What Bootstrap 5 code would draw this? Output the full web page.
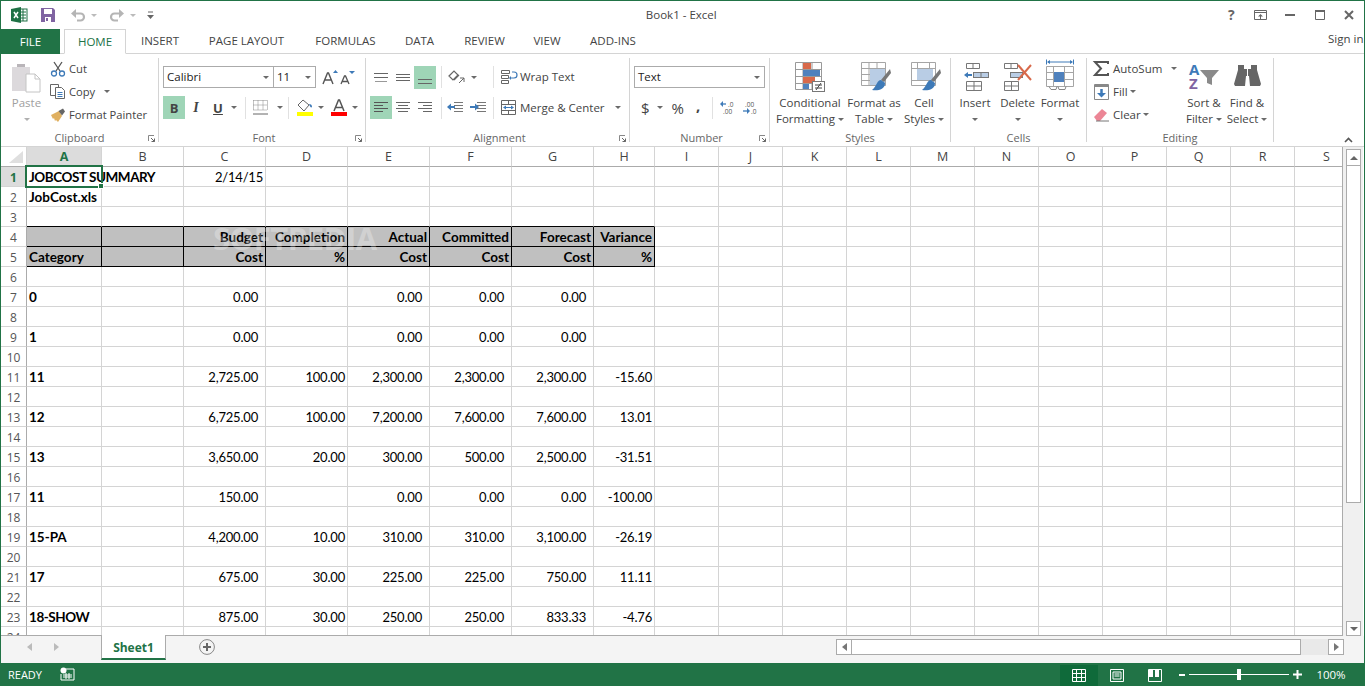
<!DOCTYPE html>
<html lang="en"><head><meta charset="utf-8"><title>Book1 - Excel</title>
<link href="https://cdn.jsdelivr.net/npm/bootstrap@5.3.0/dist/css/bootstrap.min.css" rel="stylesheet">
<style>
html,body{height:100%;overflow:hidden;background:#fff}
body{font:12px/16px "Open Sans",sans-serif;color:#444}
svg{display:block;flex:none;overflow:visible}
.xw{width:1365px;height:686px;border:1px solid #217346;border-bottom:0}
.ttl{height:28px;flex:none;position:relative}
.ttl-name{flex:1;text-align:center;padding-right:8px;font-size:11.5px;color:#444}
.qa{padding-left:10px;gap:0}
.wc{gap:0;padding-right:0}
.wcb{width:29.5px;display:flex;justify-content:center}
.tabs{height:25px;flex:none;border-bottom:1px solid #d4d4d4;font-size:11.5px}
.tb-file{width:59px;height:25px;background:#217346;color:#fff;text-align:center;line-height:25px;margin-right:4px}
.tb{height:25px;line-height:24px;text-align:center;color:#444}
.tb-on{width:62px;border:1px solid #d4d4d4;border-bottom:1px solid #fff;color:#217346;background:#fff}
.signin{margin-left:auto;font-size:11.5px;padding-right:0;width:36px;white-space:nowrap;overflow:hidden;margin-top:2px}
.rbn{height:93px;flex:none;border-bottom:1px solid #d4d4d4;padding-top:4px}
.grp{height:84px;flex:none;border-right:1px solid #d4d4d4}
.grp-in{height:73px;flex:none}
.grp-lb{height:14px;display:grid;grid-template-columns:1fr auto 1fr;color:#666;font-size:11px;line-height:14px;flex:none}
.dl{justify-self:end;align-self:center;margin-right:3px}
.st{display:flex;flex-direction:column}
.r23{height:23px;display:flex;align-items:center;white-space:nowrap;font-size:11.5px}
.clipst .r23{font-size:11.2px}
.big{display:flex;flex-direction:column;align-items:center;text-align:center;flex:none;font-size:11.5px;line-height:16px;white-space:nowrap}
.big-ic{height:37px;padding-top:4px;flex:none}
.cr{display:inline-block;border:3px solid transparent;border-top:3px solid #6a6a6a;border-bottom:0;vertical-align:middle;flex:none}
.sel{height:22px;border:1px solid #ababab;background:#fff;display:flex;align-items:center;justify-content:space-between;padding:0 4px 0 3px;color:#222;font-size:11.5px;flex:none}
.rw1{height:22px;margin-top:8px;display:flex;align-items:center;flex:none}
.rw2{height:23px;margin-top:8px;display:flex;align-items:center;flex:none}
.ib{width:22px;height:23px;display:flex;align-items:center;justify-content:center;flex:none}
.ib-on{background:#9fd5b7}
.vsp{width:1px;height:22px;background:#e1e1e1;flex:none}
.bl{font-family:"Liberation Serif",serif;font-size:14px;color:#444}
.sh{flex:1;min-height:0}
.gr{width:1342px;flex:none;overflow:hidden;position:relative;border-right:1px solid #ababab;border-bottom:1px solid #ababab;height:489px}
.sheet{border-collapse:separate;border-spacing:0;table-layout:fixed;width:1358px;font:bold 13.5px/17px Lato,sans-serif;color:#000}
.sheet td,.sheet th{height:20px;padding:2px 2px 0 2px;border-right:1px solid #d4d4d4;border-bottom:1px solid #d4d4d4;white-space:nowrap;overflow:visible}
.sheet th{font:12.5px/19px "Open Sans",sans-serif;color:#444;text-align:center;border-bottom-color:#ababab;background:#fff;padding:0}
.sheet th.rh{font:12px/17px "Open Sans",sans-serif;color:#555;border-bottom-color:#d4d4d4;border-right-color:#ababab;padding:2px 0 0}
.sheet th.on{background:#dcdcdc;color:#217346;font-weight:700}
.sheet td.v{text-align:right;font-weight:400;font-size:13px;letter-spacing:-.2px}
.sheet td.b{text-align:right}
.sheet td.ac{padding-right:7px}
.sheet td.hd{background:#c0c0c0;border-right-color:#000;border-bottom-color:#000}
.sheet td.tp{border-bottom-color:#000}
.sheet td.a1{position:relative}
.tight{letter-spacing:-.45px}
.cursor{position:absolute;left:-2px;top:-2px;width:78px;height:23px;border:2px solid #217346;pointer-events:none}
.cursor::after{content:"";position:absolute;right:-3px;bottom:-3px;background:#217346;border:1px solid #fff;box-sizing:content-box;width:4px;height:4px}
.wm{position:absolute;left:212px;top:74px;font:700 31px/34px "Open Sans",sans-serif;color:#fff;opacity:.28;letter-spacing:-.5px;pointer-events:none}
.vs{width:20px;flex:none;background:#f0f0f0;padding:2px 0 0 3px}
.sb{border:1px solid #ababab;background:#fff;display:flex;align-items:center;justify-content:center;flex:none}
.vs-up{height:17px;width:15px}
.vs-th{height:338px;width:15px;border:1px solid #ababab;background:#fff;margin-top:-1px;flex:none}
.vs-dn{height:15px;width:15px;margin-top:auto;margin-bottom:0}
.shb{height:27px;flex:none;background:#f4f4f4;position:relative}
.shb-nav{width:100px;padding-left:26px;gap:22px;padding-bottom:5px;flex:none}
.sh-tab{height:23px;background:#fff;border:1px solid #ababab;border-top:0;border-bottom:2px solid #217346;color:#217346;font-weight:700;text-align:center;line-height:25px;flex:none;font-size:12px;margin-top:-1px;box-sizing:content-box;width:63px}
.add{margin-left:33px;margin-bottom:5px}
.hs{margin-left:auto;margin-right:20px;height:16px;margin-bottom:5px;background:#e9e9e9;width:508px}
.hs-b{width:16px;height:16px}
.hs-th{width:450px;height:16px;background:#fff;border:1px solid #ababab;margin-left:-1px}
.stb{height:23px;flex:none;background:#217346;color:#fff;font-size:11px;line-height:23px;padding-left:7px}
.vw{width:38px;height:21px;display:flex;align-items:center;justify-content:center;margin-top:1px}
.vw-on{background:#0f6a3a}
.zm{margin-left:auto;gap:0;padding-right:0}
.slid{width:100px;height:1px;background:#fff;position:relative;margin:0 4px}
.slid i{position:absolute;left:48px;top:-5px;width:4px;height:11px;background:#fff}
.pct{width:62px;text-align:center;padding-right:4px;font-size:11.5px}
</style></head>
<body>
<div class="xw d-flex flex-column">
 <!-- title bar -->
 <div class="ttl d-flex align-items-center">
  <div class="qa d-flex align-items-center">
   <svg width="16" height="16" viewBox="0 0 16 16"><rect x="8" y="2" width="8" height="12" fill="#fff" stroke="#1e7145"/><path d="M9 5h6M9 8h6M9 11h6M12 2v12" stroke="#1e7145"/><path d="M0 2 10 0v16L0 14z" fill="#1e7145"/><path d="M3 5l4 6M7 5l-4 6" stroke="#fff" stroke-width="1.5"/></svg>
   <svg width="14" height="14" viewBox="0 0 14 14" style="margin-left:14px"><path d="M0 0h12l2 2v12H0z" fill="#8064a2"/><rect x="3" y="1" width="8" height="5" fill="#fff"/><rect x="4" y="9" width="6" height="5" fill="#fff"/><rect x="5" y="10" width="2" height="3" fill="#8064a2"/></svg>
   <svg width="16" height="14" viewBox="0 0 16 14" style="margin-left:15px"><path d="M3 5.5h7.500a3.500 3.500 0 0 1 0 7H7" fill="none" stroke="#b5b5b5" stroke-width="2.200"/><path d="M6 1 1 5.500 6 10z" fill="#b5b5b5"/></svg>
   <span class="cr" style="border-top-color:#bbb;margin-left:5px"></span>
   <svg width="16" height="14" viewBox="0 0 16 14" style="margin-left:12px"><path d="M13 5.500H5.500a3.500 3.500 0 0 0 0 7H9" fill="none" stroke="#b5b5b5" stroke-width="2.200"/><path d="M10 1l5 4.500-5 4.500z" fill="#b5b5b5"/></svg>
   <span class="cr" style="border-top-color:#bbb;margin-left:5px"></span>
   <svg width="7" height="8" viewBox="0 0 7 8" style="margin-left:11px"><path d="M1 1h5" stroke="#666"/><path d="M0 4h7L3.500 8z" fill="#666"/></svg>
  </div>
  <div class="ttl-name">Book1 - Excel</div>
  <div class="wc d-flex align-items-center">
   <div class="wcb"><span style="font:700 14px/14px 'Open Sans',sans-serif;color:#666">?</span></div>
   <div class="wcb"><svg width="13" height="11" viewBox="0 0 13 11"><path d="M.5.500h12v9H.5zM.5 2.500h12" fill="none" stroke="#666"/><path d="M6.500 4l2.500 2.500H7V9H6V6.500H4z" fill="#666"/></svg></div>
   <div class="wcb"><svg width="10" height="2"><rect width="10" height="2" fill="#666"/></svg></div>
   <div class="wcb"><svg width="10" height="10" viewBox="0 0 10 10"><path d="M.5 1.500h9v8h-9z" fill="none" stroke="#666"/><path d="M0 0h10v2H0z" fill="#666"/></svg></div>
   <div class="wcb"><svg width="10" height="10" viewBox="0 0 10 10"><path d="M1 1l8 8M9 1l-8 8" stroke="#666" stroke-width="2"/></svg></div>
  </div>
 </div>
 <!-- tabs -->
 <div class="tabs d-flex">
  <div class="tb-file">FILE</div>
  <div class="tb tb-on">HOME</div>
  <div class="tb" style="width:68px">INSERT</div>
  <div class="tb" style="width:105px">PAGE LAYOUT</div>
  <div class="tb" style="width:93px">FORMULAS</div>
  <div class="tb" style="width:55px">DATA</div>
  <div class="tb" style="width:75px">REVIEW</div>
  <div class="tb" style="width:50px">VIEW</div>
  <div class="tb" style="width:82px">ADD-INS</div>
  <div class="signin">Sign in</div>
 </div>
 <!-- ribbon -->
 <div class="rbn d-flex">
  <!-- clipboard -->
  <div class="grp d-flex flex-column" style="width:158px">
   <div class="grp-in d-flex">
    <div class="big" style="width:49px;color:#a0a0a0;padding-left:2px"><div class="big-ic"><svg width="29" height="31" viewBox="0 0 29 31"><path d="M0 5h5V2h8v3h5v24H0z" fill="#dcd9dc"/><path d="M5 5V2h8v3z" fill="#b9b5b9"/><path d="M14 12h9l5 5v13H14z" fill="#fff" stroke="#c4c4c4"/><path d="M23 12v5h5" fill="none" stroke="#c4c4c4"/></svg></div><div>Paste</div><div style="line-height:16px"><span class="cr" style="border-top-color:#b0b0b0"></span></div></div>
    <div class="st clipst" style="margin-top:-1px">
     <div class="r23"><svg width="16" height="16" viewBox="0 0 16 16" style="margin-right:3px"><path d="M4 1l6 9M12 1l-6 9" stroke="#555" stroke-width="1.300"/><circle cx="4" cy="12.500" r="2.500" fill="none" stroke="#3e7ab8" stroke-width="1.300"/><circle cx="12" cy="12.500" r="2.500" fill="none" stroke="#3e7ab8" stroke-width="1.300"/></svg>Cut</div>
     <div class="r23"><svg width="16" height="15" viewBox="0 0 16 15" style="margin-right:3px"><path d="M.5.500h8v11h-8z" fill="#fff" stroke="#666"/><path d="M5.500 3.500h6l3 3v8h-9z" fill="#fff" stroke="#666"/><path d="M7.500 8.500h5M7.500 10.500h5M7.500 12.500h5" stroke="#3e7ab8"/></svg>Copy<span class="cr" style="margin-left:9px"></span></div>
     <div class="r23"><svg width="16" height="14" viewBox="0 0 16 14" style="margin-right:3px"><path d="M1 7 9 3l3 5-4 6-2-2-1 1-1-3-1 1z" fill="#e0b060"/><path d="M8.500 3 13 .5l2 3-3 4z" fill="#666"/></svg>Format Painter</div>
    </div>
   </div>
   <div class="grp-lb"><span></span><span>Clipboard</span><svg class="dl" width="7" height="7" viewBox="0 0 7 7"><path d="M.5 6V.5H6" fill="none" stroke="#888"/><path d="M3 3l3.500 3.500M6.500 3.500v3h-3" fill="none" stroke="#666"/></svg></div>
  </div>
  <!-- font -->
  <div class="grp d-flex flex-column" style="width:207px;padding-left:4px">
   <div class="grp-in">
    <div class="rw1">
     <div class="sel" style="width:111px"><span>Calibri</span><span class="cr"></span></div>
     <div class="sel" style="width:43px;margin-left:-1px"><span>11</span><span class="cr"></span></div>
     <svg width="18" height="14" viewBox="0 0 18 14" style="margin-left:6px"><path d="M1 14 5.500 3h1L11 14M3 10h6" fill="none" stroke="#555" stroke-width="1.400"/><path d="M11 3l2.500-3L16 3z" fill="#3e7ab8"/></svg>
     <svg width="16" height="13" viewBox="0 0 16 13" style="margin-left:0"><path d="M1 13 4.500 5h1L9 13M2.500 10.500h5" fill="none" stroke="#555" stroke-width="1.300"/><path d="M9 0h6l-3 3z" fill="#3e7ab8"/></svg>
    </div>
    <div class="rw2">
     <div class="ib ib-on" style="font-weight:700;font-size:13px">B</div>
     <div class="ib bl" style="font-style:italic;font-weight:700">I</div>
     <div class="ib" style="font-weight:700;font-size:13px;text-decoration:underline">U</div><span class="cr" style="margin:0 8px 0 2px"></span>
     <div class="vsp" style="margin-right:7px"></div>
     <svg width="15" height="15" viewBox="0 0 15 15"><path d="M.5.500h14M.500 5h14M.5 10h14M.5.500v10M5 .5v10M10 .5v10M14.500.5v10" fill="none" stroke="#888" stroke-dasharray="1 1"/><path d="M0 14h15" stroke="#666"/></svg>
     <span class="cr" style="margin:0 5px 0 9px"></span>
     <div class="vsp" style="margin-right:8px"></div>
     <div class="d-flex flex-column"><svg width="16" height="13" viewBox="0 0 16 13"><path d="M6 1l6 5-5 6-6-6z" fill="#fff" stroke="#666"/><path d="M12 5c2 0 3 1 3 3-1 1-2 0-3-3z" fill="#3e7ab8"/></svg><svg width="16" height="4"><rect width="16" height="4" fill="#ff0"/></svg></div>
     <span class="cr" style="margin:0 7px 0 5px"></span>
     <div class="d-flex flex-column"><svg width="16" height="13" viewBox="0 0 16 13"><path d="M3 12 7.500 1h1L13 12M4.500 8.500h7" fill="none" stroke="#555" stroke-width="1.500"/></svg><svg width="16" height="4"><rect width="16" height="4" fill="#f00"/></svg></div>
     <span class="cr" style="margin-left:5px"></span>
    </div>
   </div>
   <div class="grp-lb"><span></span><span>Font</span><svg class="dl" width="7" height="7" viewBox="0 0 7 7"><path d="M.5 6V.5H6" fill="none" stroke="#888"/><path d="M3 3l3.500 3.500M6.500 3.500v3h-3" fill="none" stroke="#666"/></svg></div>
  </div>
  <!-- alignment -->
  <div class="grp d-flex flex-column" style="width:264px;padding-left:4px">
   <div class="grp-in">
    <div class="rw1">
     <div class="ib"><svg width="14" height="9" viewBox="0 0 14 9"><path d="M0 .5h14M0 4.500h14" stroke="#666"/><path d="M1 8.500h12" stroke="#999"/></svg></div>
     <div class="ib"><svg width="14" height="9" viewBox="0 0 14 9"><path d="M0 1.500h14M0 4.500h14M0 7.500h14" stroke="#666"/></svg></div>
     <div class="ib ib-on"><svg width="14" height="14" viewBox="0 0 14 14"><path d="M0 9.500h14M0 13.500h14" stroke="#666"/></svg></div>
     <div class="vsp" style="margin:0 5px"></div>
     <svg width="18" height="16" viewBox="0 0 18 16"><path d="M2 7l5-5 4 4-5 5zM7 11l5-5" fill="none" stroke="#666" stroke-width="1.200"/><path d="M12 14l5-5M17 13V9h-4" fill="none" stroke="#666"/></svg>
     <span class="cr" style="margin:0 16px 0 6px"></span>
     <div class="vsp" style="margin-right:7px"></div>
     <svg width="15" height="15" viewBox="0 0 15 15" style="margin-right:4px"><path d="M.5.500h8v3h-8zM.5 5.500h7v3h-7zM.5 10.500h7v3h-7z" fill="none" stroke="#666"/><path d="M11 2h2a2 2 0 0 1 0 6H9" fill="none" stroke="#3e7ab8" stroke-width="1.200"/><path d="M10 6 8 8l2 2z" fill="#3e7ab8"/></svg>
     <span style="font-size:11.5px">Wrap Text</span>
    </div>
    <div class="rw2">
     <div class="ib ib-on"><svg width="14" height="11" viewBox="0 0 14 11"><path d="M0 .5h14M0 3.500h9M0 6.500h14M0 9.500h9" stroke="#555"/></svg></div>
     <div class="ib"><svg width="14" height="11" viewBox="0 0 14 11"><path d="M0 .5h14M2 3.500h10M0 6.500h14M2 9.500h10" stroke="#666"/></svg></div>
     <div class="ib"><svg width="14" height="11" viewBox="0 0 14 11"><path d="M0 .5h14M5 3.500h9M0 6.500h14M5 9.500h9" stroke="#666"/></svg></div>
     <div class="vsp" style="margin:0 5px"></div>
     <svg width="16" height="11" viewBox="0 0 16 11"><path d="M7 .5h9M7 3.500h9M7 6.500h9M7 9.500h9" stroke="#777"/><path d="M8 5H3" stroke="#3e7ab8" stroke-width="2"/><path d="M4 1.500 0 5l4 3.500z" fill="#3e7ab8"/></svg>
     <svg width="16" height="11" viewBox="0 0 16 11" style="margin-left:7px"><path d="M7 .5h9M7 3.500h9M7 6.500h9M7 9.500h9" stroke="#777"/><path d="M0 5h6" stroke="#3e7ab8" stroke-width="2"/><path d="M5 1.500 9 5 5 8.500z" fill="#3e7ab8"/></svg>
     <div class="vsp" style="margin:0 7px"></div>
     <svg width="15" height="15" viewBox="0 0 15 15" style="margin-right:4px"><path d="M.5.500h14v14H.5zM.5 4.500h14M.5 10.500h14M7.500.5v4M7.500 10.500v4" fill="none" stroke="#666"/><path d="M3 7.500h9" stroke="#3e7ab8"/><path d="M5 5.500l-3 2 3 2zM10 5.500l3 2-3 2z" fill="#3e7ab8"/></svg>
     <span style="font-size:11.5px">Merge &amp; Center</span><span class="cr" style="margin-left:10px"></span>
    </div>
   </div>
   <div class="grp-lb"><span></span><span>Alignment</span><svg class="dl" width="7" height="7" viewBox="0 0 7 7"><path d="M.5 6V.5H6" fill="none" stroke="#888"/><path d="M3 3l3.500 3.500M6.500 3.500v3h-3" fill="none" stroke="#666"/></svg></div>
  </div>
  <!-- number -->
  <div class="grp d-flex flex-column" style="width:140px;padding-left:4px">
   <div class="grp-in">
    <div class="rw1"><div class="sel" style="width:131px"><span>Text</span><span class="cr"></span></div></div>
    <div class="rw2">
     <span style="font-size:15px;margin-left:7px">$</span><span class="cr" style="margin:0 9px 0 7px"></span>
     <span style="font-size:15px">%</span>
     <span style="font-size:15px;font-weight:700;margin:-6px 12px 0 12px;line-height:10px">,</span>
     <div class="vsp" style="margin-right:7px"></div>
     <svg width="16" height="14" viewBox="0 0 16 14"><path d="M6 3H2" stroke="#3e7ab8" stroke-width="1.300"/><path d="M3 0 0 3l3 3z" fill="#3e7ab8"/><text x="8" y="6" font-size="6.500" fill="#555" font-family="Open Sans">.0</text><text x="3" y="13" font-size="6.500" fill="#555" font-family="Open Sans">.00</text></svg>
     <svg width="16" height="14" viewBox="0 0 16 14" style="margin-left:6px"><text x="3" y="6" font-size="6.500" fill="#555" font-family="Open Sans">.00</text><text x="9" y="13" font-size="6.500" fill="#555" font-family="Open Sans">.0</text><path d="M1 10h5" stroke="#3e7ab8" stroke-width="1.300"/><path d="M5 7l3 3-3 3z" fill="#3e7ab8"/></svg>
    </div>
   </div>
   <div class="grp-lb"><span></span><span>Number</span><svg class="dl" width="7" height="7" viewBox="0 0 7 7"><path d="M.5 6V.5H6" fill="none" stroke="#888"/><path d="M3 3l3.500 3.500M6.500 3.500v3h-3" fill="none" stroke="#666"/></svg></div>
  </div>
  <!-- styles -->
  <div class="grp d-flex flex-column" style="width:181px">
   <div class="grp-in d-flex" style="padding-left:7px">
    <div class="big" style="width:66px"><div class="big-ic"><svg width="30" height="31" viewBox="0 0 30 31"><path d="M.5.500h26v27H.5zM.5 7.500h26M.5 14.500h26M.5 21.500h26M8 .5v27M17 .5v27" fill="none" stroke="#999"/><rect x="8" y="1" width="8" height="6" fill="#d8694a"/><rect x="8" y="8" width="17" height="6" fill="#4f81bd"/><rect x="8" y="15" width="12" height="6" fill="#d8694a"/><rect x="8" y="22" width="6" height="5" fill="#4f81bd"/><rect x="17.500" y="19.500" width="12" height="10" fill="#fff" stroke="#777"/><path d="M20 23h7M20 26h7M26 21l-5 7" stroke="#444"/></svg></div><div>Conditional</div><div>Formatting <span class="cr"></span></div></div>
    <div class="big" style="width:62px"><div class="big-ic" style="padding-left:3px"><svg width="30" height="31" viewBox="0 0 30 31"><path d="M.5.500h24v23H.5zM.5 6.500h24M.5 12.500h24M.5 18.500h24M8 .5v23M16 .5v23" fill="none" stroke="#a5a5a5"/><rect x="9" y="7" width="15" height="16" fill="#b9cde5"/><path d="M29 7l-9 11 3 2 7-9z" fill="#777"/><path d="M20 18c-4 0-4 6-9 10 5 1 13 0 13-7z" fill="#3e7ab8"/></svg></div><div>Format as</div><div>Table <span class="cr"></span></div></div>
    <div class="big" style="width:38px"><div class="big-ic" style="padding-left:3px"><svg width="30" height="31" viewBox="0 0 30 31"><path d="M.5.500h24v23H.5zM.5 6.500h24M.5 18.500h24M6.500.5v6M18.500.5v6" fill="none" stroke="#a5a5a5"/><rect x="6" y="7" width="16" height="11" fill="#b9cde5"/><path d="M29 7l-9 11 3 2 7-9z" fill="#777"/><path d="M20 18c-4 0-4 6-9 10 5 1 13 0 13-7z" fill="#3e7ab8"/></svg></div><div>Cell</div><div>Styles <span class="cr"></span></div></div>
   </div>
   <div class="grp-lb"><span></span><span>Styles</span><span></span></div>
  </div>
  <!-- cells -->
  <div class="grp d-flex flex-column" style="width:136px">
   <div class="grp-in d-flex" style="padding-left:2px">
    <div class="big" style="width:44px"><div class="big-ic" style="padding-left:2px"><svg width="28" height="28" viewBox="0 0 28 28"><path d="M4.500 1.500h13v5h-13zM11 1.500v5M4.500 19.500h15v9h-15zM12 19.500v9M4.500 24h15" fill="none" stroke="#777"/><rect x="11.500" y="10.500" width="15" height="5" fill="#b9cde5" stroke="#777"/><path d="M19 10.500v5" stroke="#777"/><path d="M10 13H5" stroke="#3e7ab8" stroke-width="2"/><path d="M6 10l-4 3 4 3z" fill="#3e7ab8"/></svg></div><div>Insert</div><div><span class="cr"></span></div></div>
    <div class="big" style="width:41px"><div class="big-ic"><svg width="30" height="28" viewBox="0 0 30 28"><path d="M1.500 1.500h13v5h-13zM8 1.500v5M1.500 19.500h14v9h-14zM8.500 19.500v9M1.500 24h14" fill="none" stroke="#777"/><rect x="7.500" y="10.500" width="12" height="5" fill="#b9cde5" stroke="#777"/><path d="M15 3l13 15M28 3 15 18" stroke="#d8694a" stroke-width="2"/></svg></div><div>Delete</div><div><span class="cr"></span></div></div>
    <div class="big" style="width:44px"><div class="big-ic"><svg width="28" height="31" viewBox="0 0 28 31" style="margin-top:-3px"><path d="M.5.500v5M27.500.5v5M2 3h24" stroke="#3e7ab8" fill="none"/><path d="M4 1 1 3l3 2zM24 1l3 2-3 2z" fill="#3e7ab8"/><path d="M.5 7.500h27v20H.5zM.5 13.500h27M.5 20.500h27M7.500 7.500v20M18.500 7.500v20" fill="none" stroke="#a5a5a5"/><rect x="8" y="13" width="10" height="10" fill="#4f81bd"/><path d="M3 27.500l2 3h5l1-3M12 27.500l1 3h6l1-3" fill="none" stroke="#888"/></svg></div><div>Format</div><div><span class="cr"></span></div></div>
   </div>
   <div class="grp-lb"><span></span><span>Cells</span><span></span></div>
  </div>
  <!-- editing -->
  <div class="grp d-flex flex-column" style="width:187px">
   <div class="grp-in d-flex" style="padding-left:6px">
    <div class="st" style="width:87px;margin-top:-1px">
     <div class="r23"><svg width="16" height="15" viewBox="0 0 16 15" style="margin-right:4px"><path d="M15 3V1H2l6 6.500L2 14h13v-2" fill="none" stroke="#555" stroke-width="2"/></svg>AutoSum<span class="cr" style="margin-left:9px"></span></div>
     <div class="r23"><svg width="15" height="16" viewBox="0 0 15 16" style="margin-left:1px;margin-right:4px"><path d="M.5.500h14v15H.5z" fill="#fff" stroke="#888"/><path d="M1 1h13v2H1z" fill="#888"/><path d="M7.500 5v7" stroke="#3e7ab8" stroke-width="2.500"/><path d="M3 9l4.500 4.500L12 9z" fill="#3e7ab8"/></svg>Fill<span class="cr" style="margin-left:2px"></span></div>
     <div class="r23"><svg width="16" height="14" viewBox="0 0 16 14" style="margin-right:4px"><path d="M1 9l8-8 5 4-7 8H4z" fill="#ec8696"/><path d="M3 13h13" stroke="#777"/></svg>Clear<span class="cr" style="margin-left:2px"></span></div>
    </div>
    <div class="big" style="width:42px;margin-left:3px"><div class="big-ic"><svg width="30" height="29" viewBox="0 0 30 29"><text x="0" y="13" font-size="15" font-weight="700" fill="#3e7ab8" font-family="Open Sans">A</text><text x="0" y="27" font-size="15" font-weight="700" fill="#8064a2" font-family="Open Sans">Z</text><path d="M11 8h19l-7 8v7l-5-2v-5z" fill="#8a8a8a"/></svg></div><div>Sort &amp;</div><div>Filter <span class="cr"></span></div></div>
    <div class="big" style="width:44px"><div class="big-ic"><svg width="27" height="24" viewBox="0 0 27 24"><path d="M4 3h6v4h7V3h6v5l4 14-1 2H16l-1-10h-3l-1 10H1l-1-2L4 8z" fill="#666"/><path d="M13.500 7v17" stroke="#fff" stroke-width="1"/></svg></div><div>Find &amp;</div><div>Select <span class="cr"></span></div></div>
   </div>
   <div class="grp-lb"><span></span><span>Editing</span><span></span></div>
  </div>
  <div class="ms-auto align-self-end" style="padding:0 11px 3px 0"><svg width="9" height="6" viewBox="0 0 9 6"><path d="M1 5l3.500-3.500L8 5" fill="none" stroke="#555" stroke-width="1.600"/></svg></div>
 </div>
 <!-- sheet -->
 <div class="sh d-flex">
  <div class="gr">
   <table class="sheet"><colgroup><col style="width:26px"><col style="width:75px"><col style="width:82px"><col style="width:82px"><col style="width:82px"><col style="width:82px"><col style="width:82px"><col style="width:82px"><col style="width:61px"><col span="11" style="width:64px"></colgroup><tbody id="sb"></tbody></table>
   <div class="wm">SOFTPEDIA</div>
  </div>
  <div class="vs d-flex flex-column">
   <div class="sb vs-up"><span class="cr" style="border-top:0;border-bottom:4px solid #666;border-left-width:4px;border-right-width:4px"></span></div>
   <div class="vs-th"></div>
   <div class="sb vs-dn"><span class="cr" style="border-top:4px solid #666;border-left-width:4px;border-right-width:4px"></span></div>
  </div>
 </div>
 <!-- sheet tabs -->
 <div class="shb d-flex align-items-center">
  <div class="shb-nav d-flex align-items-center"><svg width="5" height="8"><path d="M5 0v8L0 4z" fill="#bbb"/></svg><svg width="5" height="8"><path d="M0 0v8l5-4z" fill="#bbb"/></svg></div>
  <div class="sh-tab align-self-start">Sheet1</div>
  <svg class="add" width="16" height="16" viewBox="0 0 16 16"><circle cx="8" cy="8" r="7.400" fill="none" stroke="#888"/><path d="M8 4v8M4 8h8" stroke="#666" stroke-width="2"/></svg>
  <div class="hs d-flex">
   <div class="sb hs-b"><span class="cr" style="border:4px solid transparent;border-left:0;border-right:5px solid #777"></span></div>
   <div class="hs-th"></div>
   <div class="sb hs-b ms-auto"><span class="cr" style="border:4px solid transparent;border-right:0;border-left:5px solid #777"></span></div>
  </div>
 </div>
 <!-- status -->
 <div class="stb d-flex align-items-start">
  <span>READY</span>
  <svg width="14" height="13" viewBox="0 0 14 13" style="margin:4px 0 0 18px"><circle cx="3.500" cy="3.500" r="3" fill="#fff"/><path d="M6 2h8v11H1V7" fill="none" stroke="#fff"/><path d="M3 8h9M3 10h9M6 6v6M9 6v6" stroke="#fff"/></svg>
  <div class="zm d-flex align-items-center">
   <div class="vw vw-on"><svg width="14" height="13" viewBox="0 0 14 13"><path d="M.5.500h13v12H.5zM.5 4.500h13M.5 8.500h13M4.500.5v12M9.500.5v12" fill="none" stroke="#fff"/></svg></div>
   <div class="vw"><svg width="14" height="13" viewBox="0 0 14 13"><path d="M.5.500h13v12H.5z" fill="none" stroke="#fff"/><path d="M3 3h8v7H3z M4.500 5h5M4.500 7h5" fill="none" stroke="#fff"/></svg></div>
   <div class="vw"><svg width="14" height="13" viewBox="0 0 14 13"><path d="M.5.500h13v12H.5z" fill="none" stroke="#fff"/><path d="M1 1h4v7H1zM7 1h4v7H7z" fill="#fff"/></svg></div>
   <svg width="6" height="2" style="margin-left:5px"><rect width="6" height="2" fill="#fff"/></svg>
   <div class="slid"><i></i></div>
   <svg width="9" height="9" viewBox="0 0 9 9"><path d="M0 4.500h9M4.500 0v9" stroke="#fff" stroke-width="2"/></svg>
   <div class="pct">100%</div>
  </div>
 </div>
</div>
<script>
var cols="ABCDEFGHIJKLMNOPQRS".split("");
var D={1:['<span class="tight">JOBCOST SUMMARY</span>',null,"2/14/15"],2:["JobCost.xls"],
4:["","","Budget","Completion","Actual","Committed","Forecast","Variance"],
5:["Category","","Cost","%","Cost","Cost","Cost","%"],
7:["0","","0.00","","0.00","0.00","0.00",""],9:["1","","0.00","","0.00","0.00","0.00",""],
11:["11","","2,725.00","100.00","2,300.00","2,300.00","2,300.00","-15.60"],
13:["12","","6,725.00","100.00","7,200.00","7,600.00","7,600.00","13.01"],
15:["13","","3,650.00","20.00","300.00","500.00","2,500.00","-31.51"],
17:["11","","150.00","","0.00","0.00","0.00","-100.00"],
19:["15-PA","","4,200.00","10.00","310.00","310.00","3,100.00","-26.19"],
21:["17","","675.00","30.00","225.00","225.00","750.00","11.11"],
23:['<span class="tight">18-SHOW</span>',"","875.00","30.00","250.00","250.00","833.33","-4.76"]};
var h='<tr><th><svg width="14" height="12" viewBox="0 0 14 12" style="margin:0 0 0 8px"><path d="M14 0v12H0z" fill="#dfdfdf"/></svg></th>';
cols.forEach(function(c){h+='<th'+(c=="A"?' class="on"':'')+'>'+c+'</th>'});h+='</tr>';
for(var r=1;r<=24;r++){
 h+='<tr><th class="rh'+(r==1?' on':'')+'">'+r+'</th>';
 cols.forEach(function(c,i){
  var v=(D[r]&&D[r][i])||"",k=[];
  if(r==4||r==5){if(i<8)k.push("hd");if(i>=2&&i<8)k.push("b");}
  else if(r==3&&i<8)k.push("tp");
  else if(r==1&&i==2)k.push("v");
  else if(r>5&&i>=2&&i<8){k.push("v");if(i!=3&&i!=7)k.push("ac");}
  if(r==1&&i==0)k.push("a1");
  h+='<td class="'+k.join(" ")+'">'+v+(r==1&&i==0?'<div class="cursor"></div>':'')+'</td>';
 });
 h+='</tr>';
}
document.getElementById("sb").innerHTML=h;
</script>
<script src="https://cdn.jsdelivr.net/npm/bootstrap@5.3.0/dist/js/bootstrap.bundle.min.js"></script>
</body></html>
